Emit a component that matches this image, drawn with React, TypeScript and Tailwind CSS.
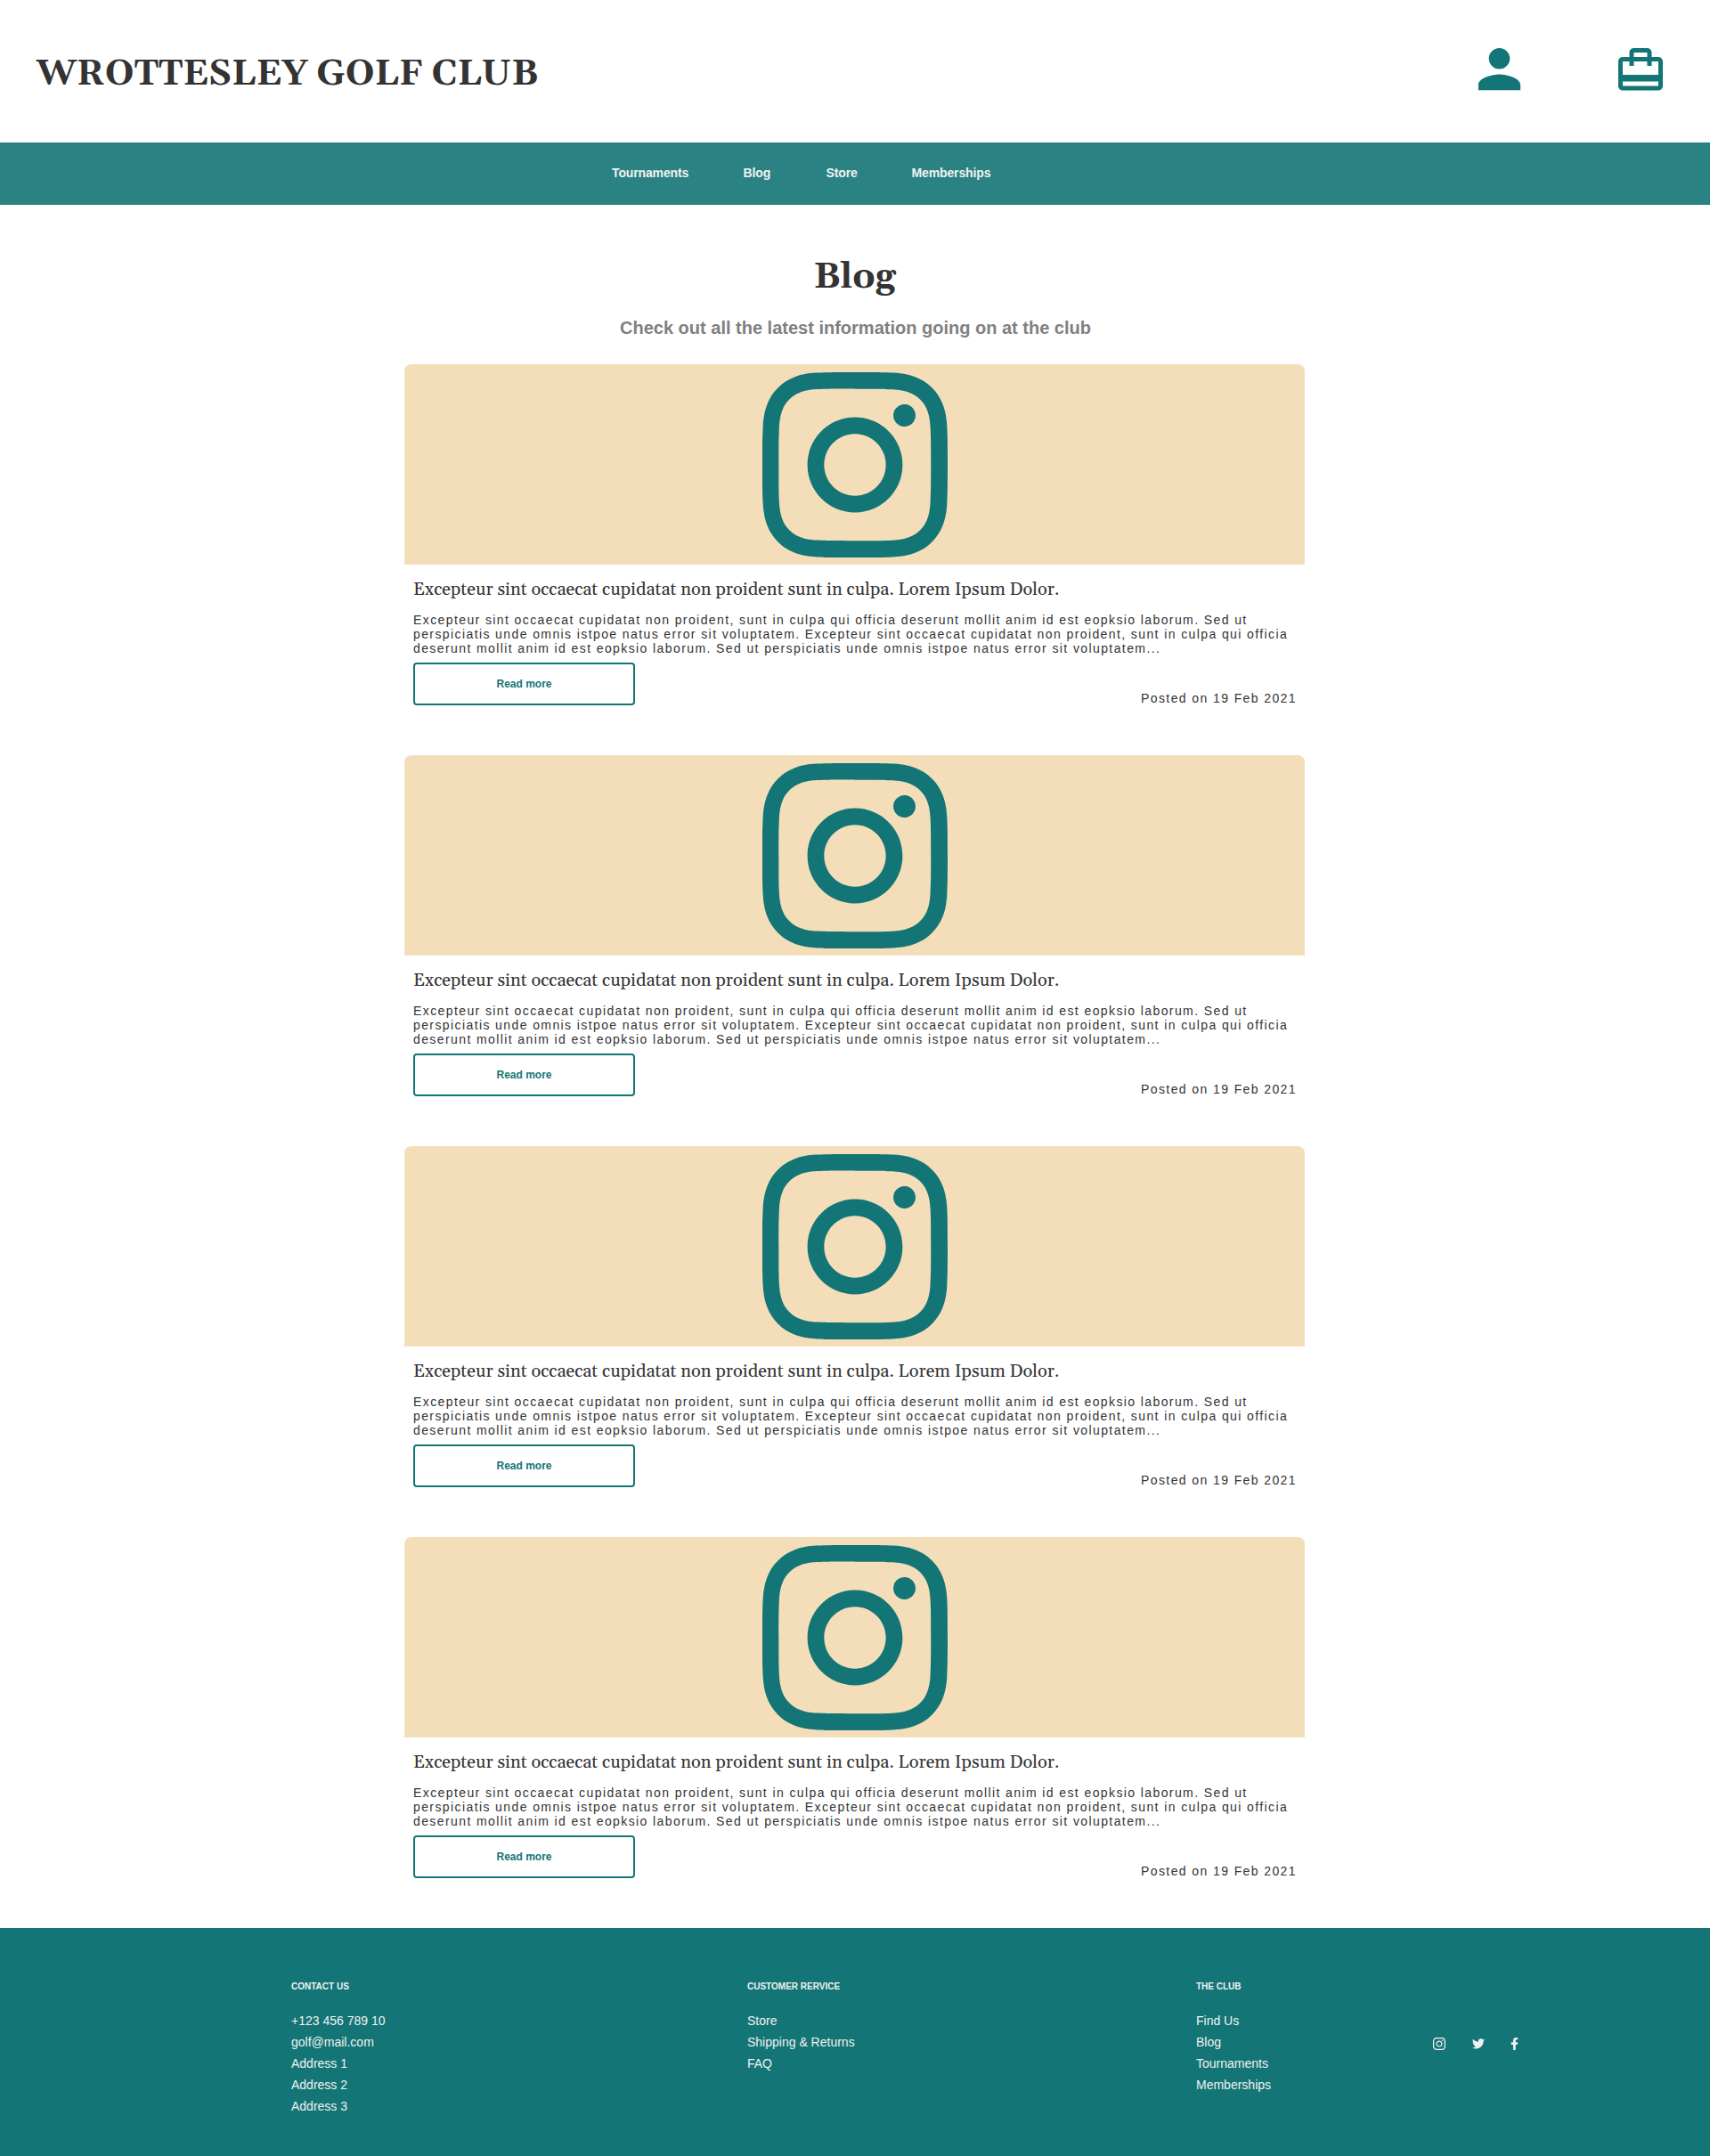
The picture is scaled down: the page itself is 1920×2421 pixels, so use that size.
import React from "react";
import { FaFacebookF } from "react-icons/fa";
import { GrTwitter } from "react-icons/gr";
import { IoMdPerson } from "react-icons/io";
import { MdCardTravel } from "react-icons/md";

const INSTAGRAM =
  "M12 0C8.74 0 8.333.015 7.053.072 5.775.132 4.905.333 4.14.63c-.789.306-1.459.717-2.126 1.384S.935 3.35.63 4.14C.333 4.905.131 5.775.072 7.053.012 8.333 0 8.74 0 12s.015 3.667.072 4.947c.06 1.277.261 2.148.558 2.913.306.788.717 1.459 1.384 2.126.667.666 1.336 1.079 2.126 1.384.766.296 1.636.499 2.913.558C8.333 23.988 8.74 24 12 24s3.667-.015 4.947-.072c1.277-.06 2.148-.262 2.913-.558.788-.306 1.459-.718 2.126-1.384.666-.667 1.079-1.335 1.384-2.126.296-.765.499-1.636.558-2.913.06-1.28.072-1.687.072-4.947s-.015-3.667-.072-4.947c-.06-1.277-.262-2.149-.558-2.913-.306-.789-.718-1.459-1.384-2.126C21.319 1.347 20.651.935 19.86.63c-.765-.297-1.636-.499-2.913-.558C15.667.012 15.26 0 12 0zm0 2.16c3.203 0 3.585.016 4.85.071 1.17.055 1.805.249 2.227.415.562.217.96.477 1.382.896.419.42.679.819.896 1.381.164.422.36 1.057.413 2.227.057 1.266.07 1.646.07 4.85s-.015 3.585-.074 4.85c-.061 1.17-.256 1.805-.421 2.227-.224.562-.479.96-.899 1.382-.419.419-.824.679-1.38.896-.42.164-1.065.36-2.235.413-1.274.057-1.649.07-4.859.07-3.211 0-3.586-.015-4.859-.074-1.171-.061-1.816-.256-2.236-.421-.569-.224-.96-.479-1.379-.899-.421-.419-.69-.824-.9-1.38-.165-.42-.359-1.065-.42-2.235-.045-1.26-.061-1.649-.061-4.844 0-3.196.016-3.586.061-4.861.061-1.17.255-1.814.42-2.234.21-.57.479-.96.9-1.381.419-.419.81-.689 1.379-.898.42-.166 1.051-.361 2.221-.421 1.275-.045 1.65-.06 4.859-.06l.045.03zm0 3.678c-3.405 0-6.162 2.76-6.162 6.162 0 3.405 2.76 6.162 6.162 6.162 3.405 0 6.162-2.76 6.162-6.162 0-3.405-2.76-6.162-6.162-6.162zM12 16c-2.21 0-4-1.79-4-4s1.79-4 4-4 4 1.79 4 4-1.79 4-4 4zm7.846-10.405c0 .795-.646 1.44-1.44 1.44-.795 0-1.44-.646-1.44-1.44 0-.794.646-1.439 1.44-1.439.793-.001 1.44.645 1.44 1.439z";

function Instagram({ className }: { className: string }) {
  return (
    <svg viewBox="0 0 24 24" fill="currentColor" className={className}>
      <path d={INSTAGRAM} />
    </svg>
  );
}

const POSTS = [1, 2, 3, 4];

function Post() {
  return (
    <article className="mb-[55px] h-[384px]">
      <div className="flex h-[225px] rounded-t-lg bg-[#f4deba] pt-[9px] pl-[402px]">
        <Instagram className="size-[208px] text-[#137575]" />
      </div>
      <div className="px-[10px] pt-4">
        <h2 className="font-[Georgia,Gelasio,'Liberation_Serif',serif] text-[20px] leading-6 whitespace-nowrap">
          Excepteur sint occaecat cupidatat non proident sunt in culpa. Lorem Ipsum Dolor.
        </h2>
        <p className="mt-[14px] text-sm leading-4 tracking-[1.4px] whitespace-nowrap">
          Excepteur sint occaecat cupidatat non proident, sunt in culpa qui officia deserunt mollit anim id est eopksio laborum. Sed ut
          <br />
          perspiciatis unde omnis istpoe natus error sit voluptatem. Excepteur sint occaecat cupidatat non proident, sunt in culpa qui officia
          <br />
          deserunt mollit anim id est eopksio laborum. Sed ut perspiciatis unde omnis istpoe natus error sit voluptatem...
        </p>
        <div className="mt-2 flex items-end justify-between">
          <button className="h-12 w-[249px] rounded-[4px] border-2 border-[#137575] text-xs font-bold text-[#137575]">
            Read more
          </button>
          <span className="-mr-px text-sm leading-4 tracking-[1.4px]">Posted on 19 Feb 2021</span>
        </div>
      </div>
    </article>
  );
}

function FooterColumn({ title, items, className }: { title: string; items: string[]; className: string }) {
  return (
    <div className={className}>
      <h3 className="text-[10px] leading-3 font-bold">{title}</h3>
      <ul className="mt-5 text-sm leading-6">
        {items.map((item) => (
          <li key={item}>{item}</li>
        ))}
      </ul>
    </div>
  );
}

export default function App() {
  return (
    <div className="min-h-[2421px] w-[1920px] bg-white font-['Liberation_Sans',Arial,sans-serif] text-[#333333]">
      <header className="flex h-40 justify-between pl-[41px]">
        <h1 className="pt-[61px] font-[Georgia,Gelasio,'Liberation_Serif',serif] text-[40px] leading-[46px] font-bold tracking-[-0.04px]">
          WROTTESLEY GOLF CLUB
        </h1>
        <div className="flex pr-[48px] text-[#137575]">
          <IoMdPerson className="mt-[46px] mr-[97px] size-[63px]" />
          <MdCardTravel className="mt-[49px] size-[60px]" />
        </div>
      </header>
      <nav className="flex h-[70px] bg-[#2a8282] pt-[26px] pl-[687px] text-sm leading-4 font-bold tracking-[-0.13px] text-[#f2f2f2]">
        <a className="w-[147.5px]">Tournaments</a>
        <a className="w-[93px]">Blog</a>
        <a className="w-[96px]">Store</a>
        <a>Memberships</a>
      </nav>
      <main className="ml-[454px] w-[1011px]">
        <h1 className="pt-[59px] text-center font-[Georgia,Gelasio,'Liberation_Serif',serif] text-[40px] leading-[46px] font-bold">
          Blog
        </h1>
        <p className="mt-[22px] mb-[29px] pl-[2px] text-center text-[20px] leading-[23px] font-bold text-[#808080]">
          Check out all the latest information going on at the club
        </p>
        {POSTS.map((id) => (
          <Post key={id} />
        ))}
      </main>
      <footer className="flex h-[256px] bg-[#137575] pt-[60px] pl-[327px] text-[#f2f2f2]">
        <FooterColumn
          className="w-[512px]"
          title="CONTACT US"
          items={["+123 456 789 10", "golf@mail.com", "Address 1", "Address 2", "Address 3"]}
        />
        <FooterColumn className="w-[504px]" title="CUSTOMER RERVICE" items={["Store", "Shipping & Returns", "FAQ"]} />
        <FooterColumn className="w-[266px]" title="THE CLUB" items={["Find Us", "Blog", "Tournaments", "Memberships"]} />
        <div className="flex gap-[30px] pt-[63px]">
          <Instagram className="size-[14px]" />
          <GrTwitter className="size-[14px]" />
          <FaFacebookF className="-ml-[1px] h-[14px] w-[9px]" />
        </div>
      </footer>
    </div>
  );
}
